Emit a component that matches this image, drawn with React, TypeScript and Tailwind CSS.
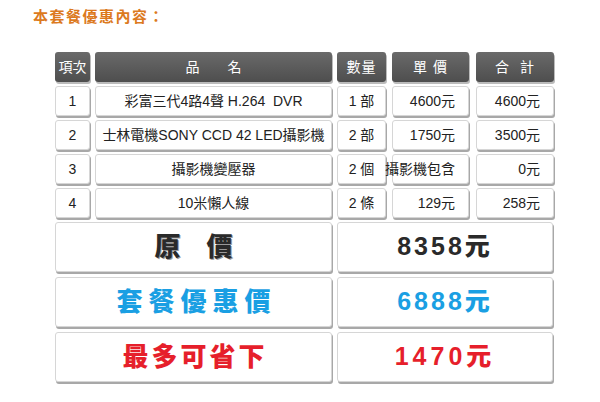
import React from 'react';

const font = { fontFamily: '"Liberation Sans", "Noto Sans CJK TC", sans-serif' };

type Row = { no: string; name: string; qty: string; price: string; total: string };

const rows: Row[] = [
  { no: '1', name: '彩富三代4路4聲 H.264  DVR', qty: '1 部', price: '4600元', total: '4600元' },
  { no: '2', name: '士林電機SONY CCD 42 LED攝影機', qty: '2 部', price: '1750元', total: '3500元' },
  { no: '3', name: '攝影機變壓器', qty: '2 個', price: '攝影機包含', total: '0元' },
  { no: '4', name: '10米懶人線', qty: '2 條', price: '129元', total: '258元' },
];

const cell =
  'shrink-0 bg-white border border-[#d6d6d6] rounded-[3px] shadow-[1px_2px_0_#a8a8a8] flex items-center text-[14px] text-[#222] whitespace-pre';
const head =
  'shrink-0 bg-gradient-to-b from-[#6a6a6a] to-[#4e4e4e] rounded-[3px] shadow-[1px_2px_0_#bbb] flex items-center justify-center text-[14px] text-white whitespace-pre';

export default function App() {
  return (
    <div className="w-[600px] h-[402px] bg-white relative overflow-hidden" style={font}>
      <div className="pl-[33px] pt-[8px] text-[15px] font-bold text-[#dc7a1e] tracking-[1.5px] leading-[18px]">
        本套餐優惠內容：
      </div>

      <div className="pl-[55px] pt-[26px] flex flex-col gap-[4px]">
        {/* header */}
        <div className="flex h-[30px]">
          <div className={`${head} w-[35px]`}>項次</div>
          <div className={`${head} w-[237px] ml-[5px]`}>品&emsp;&emsp;名</div>
          <div className={`${head} w-[49px] ml-[5px] tracking-[1px]`}>數量</div>
          <div className={`${head} w-[77px] ml-[6px] tracking-[1px]`}>單 價</div>
          <div className={`${head} w-[78px] ml-[7px] tracking-[1px]`}>合  計</div>
        </div>

        {rows.map((r) => (
          <div key={r.no} className="flex h-[30px]">
            <div className={`${cell} w-[35px] justify-center`}>{r.no}</div>
            <div className={`${cell} w-[237px] ml-[5px] justify-center`}>{r.name}</div>
            <div className={`${cell} w-[49px] ml-[5px] justify-center`}>{r.qty}</div>
            <div
              className={`${cell} w-[77px] ml-[6px] ${
                r.price.length > 5 ? 'justify-center' : 'justify-end pr-[13px]'
              }`}
            >
              {r.price.length > 5 ? (
                <span className="text-[13px] tracking-[-0.3px]">{r.price}</span>
              ) : (
                r.price
              )}
            </div>
            <div className={`${cell} w-[78px] ml-[7px] justify-end pr-[13px]`}>{r.total}</div>
          </div>
        ))}

        <div className="flex flex-col gap-[5px]">
          <div className="flex h-[50px]">
            <div className={`${cell} w-[277px] justify-center`}>
              <span className="text-[26px] font-black text-[#2a2a2a] tracking-[26px] pl-[26px] [text-shadow:1px_1px_0_#999]">
                原價
              </span>
            </div>
            <div className={`${cell} w-[216px] ml-[5px] justify-center`}>
              <span className="text-[25px] font-black text-[#2a2a2a] tracking-[3px]">8358元</span>
            </div>
          </div>
          <div className="flex h-[50px]">
            <div className={`${cell} w-[277px] justify-center`}>
              <span className="text-[26px] font-black text-[#1a9fe3] tracking-[6px] pl-[6px]">套餐優惠價</span>
            </div>
            <div className={`${cell} w-[216px] ml-[5px] justify-center`}>
              <span className="text-[25px] font-black text-[#1a9fe3] tracking-[3px]">6888元</span>
            </div>
          </div>
          <div className="flex h-[50px]">
            <div className={`${cell} w-[277px] justify-center`}>
              <span className="text-[26px] font-black text-[#e61f2b] tracking-[3px] pl-[3px]">最多可省下</span>
            </div>
            <div className={`${cell} w-[216px] ml-[5px] justify-center`}>
              <span className="text-[25px] font-black text-[#e61f2b] tracking-[4px]">1470元</span>
            </div>
          </div>
        </div>
      </div>
    </div>
  );
}
